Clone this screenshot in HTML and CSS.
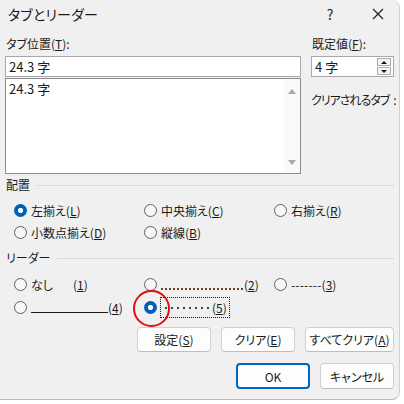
FILE: index.html
```html
<!DOCTYPE html>
<html lang="ja">
<head>
<meta charset="utf-8">
<title>タブとリーダー</title>
<link rel="stylesheet" href="styles.css">
</head>
<body>
<div class="dialog">
  <div class="titlebar">
    <span class="title">タブとリーダー</span>
    <span class="help">?</span>
    <span class="close"><svg width="12" height="12" viewBox="0 0 12 12"><path d="M1 1L11 11M11 1L1 11" stroke="#1a1a1a" stroke-width="1.1" fill="none"/></svg></span>
  </div>
  <div class="content">
    <div class="top">
      <div class="left">
        <div class="label">タブ位置(<u>T</u>):</div>
        <div class="field">24.3 字</div>
        <div class="listbox">
          <div class="list-item">24.3 字</div>
          <div class="vscroll">
            <span class="tri up"></span>
            <span class="tri down"></span>
          </div>
        </div>
      </div>
      <div class="right">
        <div class="label">既定値(<u>F</u>):</div>
        <div class="field spin">
          <span>4 字</span>
          <span class="spinbtns">
            <span class="sb"><span class="stri up"></span></span>
            <span class="sb"><span class="stri down"></span></span>
          </span>
        </div>
        <div class="clear-label">クリアされるタブ<span class="colon">:</span></div>
      </div>
    </div>

    <div class="group-head head-align"><span>配置</span><i class="rule"></i></div>
    <div class="grid rows-align">
      <div class="opt"><span class="radio on"></span><span>左揃え(<u>L</u>)</span></div>
      <div class="opt"><span class="radio"></span><span>中央揃え(<u>C</u>)</span></div>
      <div class="opt"><span class="radio"></span><span>右揃え(<u>R</u>)</span></div>
      <div class="opt"><span class="radio"></span><span>小数点揃え(<u>D</u>)</span></div>
      <div class="opt"><span class="radio"></span><span>縦線(<u>B</u>)</span></div>
    </div>

    <div class="group-head head-leader"><span>リーダー</span><i class="rule"></i></div>
    <div class="grid rows-leader">
      <div class="opt"><span class="radio"></span><span>なし</span><span class="num1">(<u>1</u>)</span></div>
      <div class="opt"><span class="radio"></span><span class="dots"></span><span>(<u>2</u>)</span></div>
      <div class="opt"><span class="radio"></span><span class="dash">-------</span><span>(<u>3</u>)</span></div>
      <div class="opt"><span class="radio"></span><span class="uline"></span><span>(<u>4</u>)</span></div>
      <div class="opt sel"><span class="radio on"></span><span class="focus"><span class="mdots"></span>(<u>5</u>)</span><span class="mark"></span></div>
    </div>

    <div class="btnrow">
      <button class="btn b-set">設定(<u>S</u>)</button>
      <button class="btn b-clr">クリア(<u>E</u>)</button>
      <button class="btn b-all">すべてクリア(<u>A</u>)</button>
    </div>
    <div class="btnrow final">
      <button class="btn default">OK</button>
      <button class="btn">キャンセル</button>
    </div>
  </div>
</div>
</body>
</html>
```
FILE: styles.css
```css
html, body {
  margin: 0;
  padding: 0;
  background: #ffffff;
}
body {
  width: 404px;
  height: 404px;
  overflow: hidden;
  font-family: "Noto Sans CJK JP", "Noto Sans", sans-serif;
  font-size: 12px;
  color: #1a1a1a;
  font-feature-settings: "palt";
}
u { text-decoration: underline; text-underline-offset: 1px; }

.dialog {
  width: 400px;
  height: 400px;
  box-sizing: border-box;
  background: #f0f0f0;
  border-right: 1px solid #cfcfcf;
  border-bottom: 1px solid #b9b9b9;
  border-radius: 0 8px 8px 0;
  display: flex;
  flex-direction: column;
}

.titlebar {
  height: 30px;
  display: flex;
  align-items: center;
  padding-left: 8px;
  padding-bottom: 2px;
  box-sizing: border-box;
}
.title { font-size: 14px; flex: 1; letter-spacing: 0.2px; }
.help { font-size: 14px; width: 14px; margin-right: 35px; text-align: center; }
.close { width: 12px; height: 12px; margin-right: 15px; display: flex; }

.content {
  padding: 6px 5px 0 5px;
  display: flex;
  flex-direction: column;
}

.top { display: flex; gap: 10px; }
.left { width: 298px; }
.right { width: 83px; }
.label { height: 16px; line-height: 16px; margin-bottom: 4px; padding-left: 1px; }

.field {
  height: 21px;
  box-sizing: border-box;
  border: 1px solid #a9a9a9;
  background: #fff;
  line-height: 19px;
  padding-left: 3px;
  font-size: 13px;
}
.listbox {
  margin-top: 1px;
  height: 96px;
  box-sizing: border-box;
  border: 1px solid #8c8c8c;
  background: #fff;
  display: flex;
}
.list-item { flex: 1; padding: 1px 0 0 3px; font-size: 13px; line-height: 18px; }
.vscroll {
  width: 16px;
  background: #f9f9f9;
  display: flex;
  flex-direction: column;
  justify-content: space-between;
  align-items: center;
  padding: 10px 0 8px;
}
.tri { width: 0; height: 0; border-left: 4px solid transparent; border-right: 4px solid transparent; }
.tri.up { border-bottom: 5px solid #a8a8a8; }
.tri.down { border-top: 5px solid #a8a8a8; }

.spin { display: flex; align-items: center; justify-content: space-between; padding-right: 2px; }
.spinbtns { display: flex; flex-direction: column; width: 14px; }
.sb {
  height: 8px;
  box-sizing: border-box;
  border: 1px solid #adadad;
  background: #f4f4f4;
  display: flex;
  align-items: center;
  justify-content: center;
}
.sb + .sb { margin-top: 1px; }
.stri { width: 0; height: 0; border-left: 3px solid transparent; border-right: 3px solid transparent; }
.stri.up { border-bottom: 3px solid #111; }
.stri.down { border-top: 3px solid #111; }
.clear-label {
  margin-top: 15px;
  line-height: 16px;
  letter-spacing: -1px;
  white-space: nowrap;
}
.colon { margin-left: 4px; }

.group-head {
  display: flex;
  align-items: center;
  height: 16px;
  line-height: 16px;
  padding-left: 1px;
}
.group-head .rule { flex: 1; height: 1px; background: #d9d9d9; margin-left: 7px; }
.head-align { margin-top: 3px; }
.head-leader { margin-top: 7px; }

.grid {
  display: grid;
  grid-template-columns: 130px 130px 120px;
  padding-left: 9px;
}
.rows-align { margin-top: 6px; grid-auto-rows: 22px; }
.rows-leader { margin-top: 7px; grid-auto-rows: 23px; }

.opt { display: flex; align-items: center; position: relative; }
.radio {
  width: 13px;
  height: 13px;
  box-sizing: border-box;
  border-radius: 50%;
  border: 1px solid #5f5f5f;
  background: #f7f7f7;
  margin-right: 4px;
  flex: none;
}
.radio.on {
  border: none;
  background: radial-gradient(circle, #ffffff 0 2.4px, #005fb8 2.9px);
}
.num1 { margin-left: 20px; }
.dots {
  width: 83px;
  height: 2px;
  margin-top: 8px;
  background: repeating-linear-gradient(to right, #6a4216 0 2px, transparent 2px 4px);
}
.dash { letter-spacing: 0.2px; }
.uline { width: 77px; height: 1px; background: #1a1a1a; margin-top: 10px; }
.focus {
  outline: 1px dotted #1a1a1a;
  outline-offset: -1px;
  height: 21px;
  width: 70px;
  box-sizing: border-box;
  display: flex;
  align-items: center;
  padding: 0 0 0 5px;
  margin-left: -1px;
}
.mdots {
  width: 46px;
  height: 2px;
  background: repeating-linear-gradient(to right, #2c4a66 0 2px, transparent 2px 6px);
  margin-right: 1px;
}
.mark {
  position: absolute;
  left: -11px;
  top: -6px;
  width: 37px;
  height: 37px;
  box-sizing: border-box;
  border: 2px solid #e01010;
  border-radius: 50%;
}

.btnrow {
  display: flex;
  justify-content: flex-end;
  gap: 10px;
  margin-top: 8px;
  padding-right: 0;
}
.btn {
  font: inherit;
  color: #1a1a1a;
  height: 25px;
  box-sizing: border-box;
  border: 1px solid #d0d0d0;
  border-bottom-color: #bdbdbd;
  border-radius: 4px;
  background: #fdfdfd;
  padding: 0;
  width: 74px;
}
.b-clr { width: 74px; }
.b-all { width: 89px; }
.final { margin-top: 11px; }
.final .btn { height: 26px; width: 74px; }
.btn.default { border: 2px solid #0067c0; }
```
